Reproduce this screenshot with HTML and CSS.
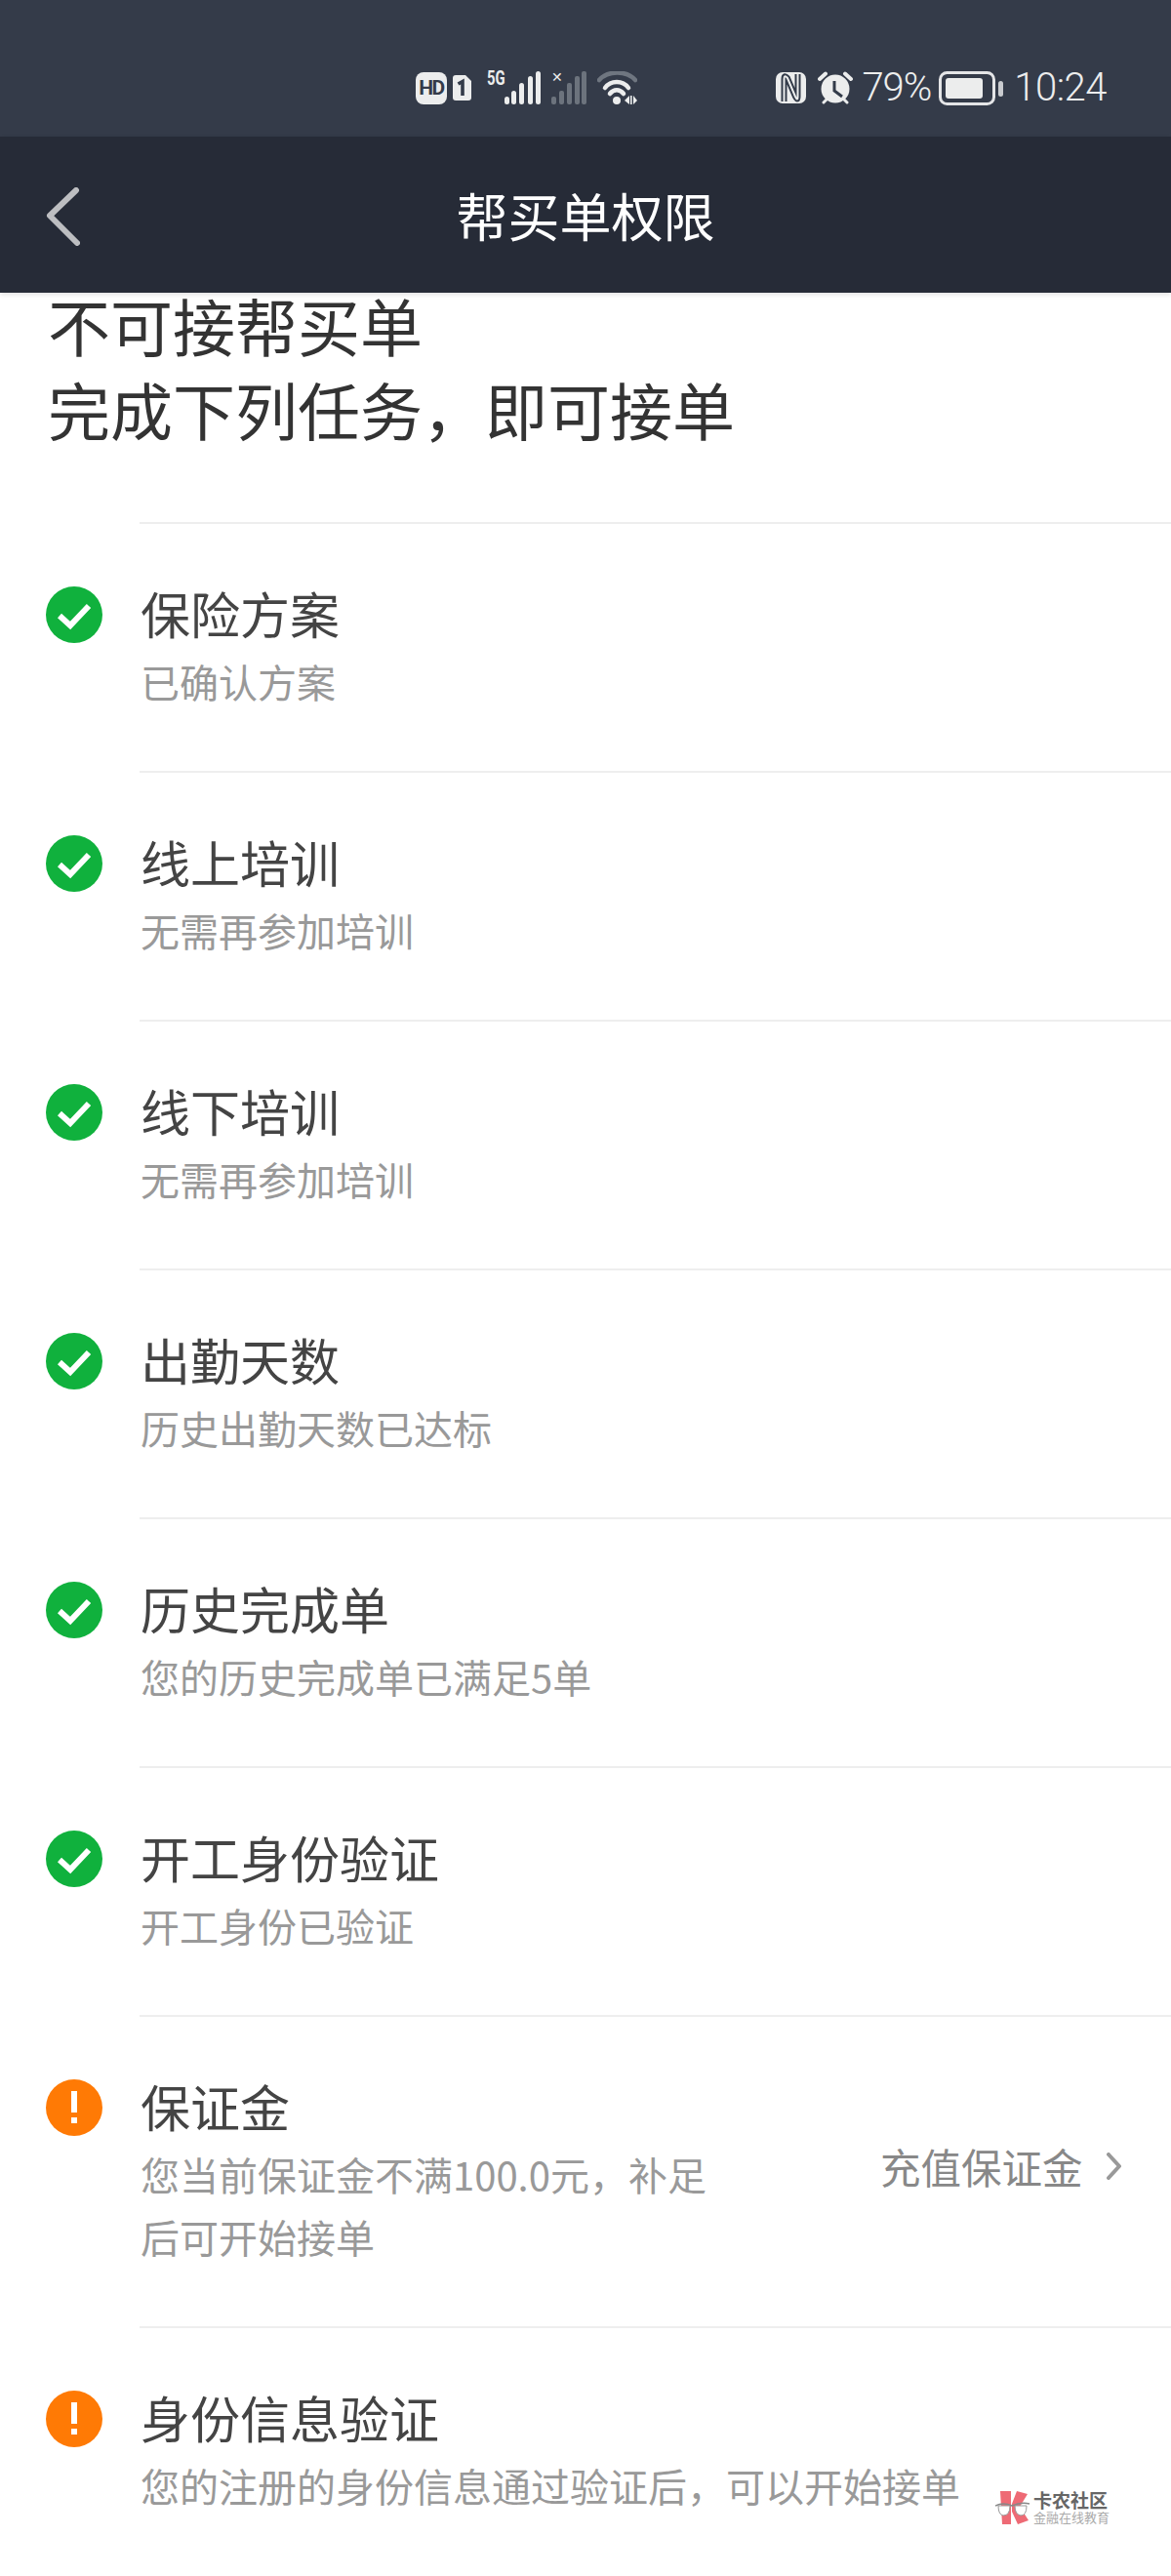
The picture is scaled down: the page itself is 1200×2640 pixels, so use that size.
FILE: index.html
```html
<!DOCTYPE html>
<html lang="zh-CN">
<head>
    <meta charset="UTF-8">
    <title>帮买单权限</title>
    <link rel="stylesheet" href="styles.css">
</head>
<body>
    <div class="page">
        <div class="status-bar">
            <div class="status-group status-left">
                <span class="hd-badge">HD</span>
                <svg class="sim" width="19" height="26" viewBox="0 0 19 26"><path d="M3 0H13L19 6V23a3 3 0 0 1-3 3H3a3 3 0 0 1-3-3V3a3 3 0 0 1 3-3Z" fill="#eceded"/><path d="M5.5 9L10 6.5V21" fill="none" stroke="#333b49" stroke-width="3.6"/></svg>
                <div class="signal">
                    <span class="signal-tag">5G</span>
                    <svg width="37" height="34" viewBox="0 0 37 34" fill="#eceded"><rect x="0" y="26" width="5" height="8" rx="2.5"/><rect x="7" y="20" width="5" height="14" rx="2.5"/><rect x="15" y="12" width="5" height="22" rx="2.5"/><rect x="24" y="5" width="5" height="29" rx="2.5"/><rect x="32" y="0" width="5" height="34" rx="2.5"/></svg>
                </div>
                <div class="signal">
                    <span class="signal-tag signal-x">✕</span>
                    <svg width="37" height="34" viewBox="0 0 37 34" fill="#6c737d"><rect x="0" y="26" width="5" height="8" rx="2"/><rect x="8" y="20" width="5" height="14" rx="2"/><rect x="16" y="12" width="5" height="22" rx="2"/><rect x="24" y="5" width="5" height="29" rx="2"/><rect x="31" y="0" width="5" height="34" rx="2"/></svg>
                </div>
                <svg width="41" height="35" viewBox="0 0 41 35" fill="none"><path d="M2 9C11 -1 30 -1 39 9" stroke="#6f7680" stroke-width="4.5" stroke-linecap="round"/><path d="M8 17C14 9 26 9 32 17" stroke="#eceded" stroke-width="4.5" stroke-linecap="round"/><path d="M13 23C17 18 23 18 27 23" stroke="#eceded" stroke-width="4.5" stroke-linecap="round"/><circle cx="20" cy="30" r="4" fill="#eceded"/><path d="M28 30L33 25V34Z" fill="#eceded"/><rect x="34" y="25" width="1.6" height="9" fill="#eceded"/><path d="M37 25L41 30 37 34Z" fill="#eceded"/></svg>
            </div>
            <div class="status-group status-right">
                <svg class="nfc" width="31" height="32" viewBox="0 0 31 32"><rect width="31" height="32" rx="7" fill="#eceded"/><path d="M8.5 30V7Q8.5 2 12 6L20 25Q22.5 30 22.5 25V2" fill="none" stroke="#333b49" stroke-width="6"/><path d="M8.5 30V7Q8.5 2 12 6L20 25Q22.5 30 22.5 25V2" fill="none" stroke="#eceded" stroke-width="2"/></svg>
                <svg class="alarm" width="36" height="34" viewBox="0 0 36 34"><circle cx="18" cy="18" r="14.5" fill="#eceded"/><path d="M2 8L8 2.5M34 8L28 2.5" stroke="#eceded" stroke-width="4" stroke-linecap="round"/><path d="M6 32l4-4M30 32l-4-4" stroke="#eceded" stroke-width="3" stroke-linecap="round"/><path d="M17 10V20L25 26" fill="none" stroke="#333b49" stroke-width="3"/></svg>
                <span class="status-text">79%</span>
                <svg class="battery" width="66" height="35" viewBox="0 0 66 35"><rect x="1.5" y="1.5" width="55" height="32" rx="7" fill="none" stroke="#e4e5e7" stroke-width="3"/><rect x="7" y="7" width="38" height="21" rx="3" fill="#eceded"/><rect x="61" y="10" width="5" height="16" rx="2.5" fill="#c9cbcf"/></svg>
                <span class="status-text status-time">10:24</span>
            </div>
        </div>

        <div class="nav-bar">
            <svg class="nav-back" width="36" height="60" viewBox="0 0 36 60"><path d="M32 3L5 29 33 57" fill="none" stroke="#bdbec1" stroke-width="6" stroke-linecap="round" stroke-linejoin="round"/></svg>
            <h1 class="nav-title">帮买单权限</h1>
        </div>

        <div class="heading">
            <div>不可接帮买单</div>
            <div>完成下列任务，即可接单</div>
        </div>

        <ul class="task-list">
            <li class="task">
                <div class="task-icon"><svg class="icon-ok" width="58" height="58" viewBox="0 0 58 58"><circle cx="29" cy="29" r="29" fill="#10b13d"/><path d="M14 30L25 40 44 20" fill="none" stroke="#fff" stroke-width="6"/></svg></div>
                <div class="task-body">
                    <div class="task-text">
                        <div class="task-title">保险方案</div>
                        <div class="task-sub">已确认方案</div>
                    </div>
                </div>
            </li>
            <li class="task">
                <div class="task-icon"><svg class="icon-ok" width="58" height="58" viewBox="0 0 58 58"><circle cx="29" cy="29" r="29" fill="#10b13d"/><path d="M14 30L25 40 44 20" fill="none" stroke="#fff" stroke-width="6"/></svg></div>
                <div class="task-body">
                    <div class="task-text">
                        <div class="task-title">线上培训</div>
                        <div class="task-sub">无需再参加培训</div>
                    </div>
                </div>
            </li>
            <li class="task">
                <div class="task-icon"><svg class="icon-ok" width="58" height="58" viewBox="0 0 58 58"><circle cx="29" cy="29" r="29" fill="#10b13d"/><path d="M14 30L25 40 44 20" fill="none" stroke="#fff" stroke-width="6"/></svg></div>
                <div class="task-body">
                    <div class="task-text">
                        <div class="task-title">线下培训</div>
                        <div class="task-sub">无需再参加培训</div>
                    </div>
                </div>
            </li>
            <li class="task">
                <div class="task-icon"><svg class="icon-ok" width="58" height="58" viewBox="0 0 58 58"><circle cx="29" cy="29" r="29" fill="#10b13d"/><path d="M14 30L25 40 44 20" fill="none" stroke="#fff" stroke-width="6"/></svg></div>
                <div class="task-body">
                    <div class="task-text">
                        <div class="task-title">出勤天数</div>
                        <div class="task-sub">历史出勤天数已达标</div>
                    </div>
                </div>
            </li>
            <li class="task">
                <div class="task-icon"><svg class="icon-ok" width="58" height="58" viewBox="0 0 58 58"><circle cx="29" cy="29" r="29" fill="#10b13d"/><path d="M14 30L25 40 44 20" fill="none" stroke="#fff" stroke-width="6"/></svg></div>
                <div class="task-body">
                    <div class="task-text">
                        <div class="task-title">历史完成单</div>
                        <div class="task-sub">您的历史完成单已满足5单</div>
                    </div>
                </div>
            </li>
            <li class="task">
                <div class="task-icon"><svg class="icon-ok" width="58" height="58" viewBox="0 0 58 58"><circle cx="29" cy="29" r="29" fill="#10b13d"/><path d="M14 30L25 40 44 20" fill="none" stroke="#fff" stroke-width="6"/></svg></div>
                <div class="task-body">
                    <div class="task-text">
                        <div class="task-title">开工身份验证</div>
                        <div class="task-sub">开工身份已验证</div>
                    </div>
                </div>
            </li>
            <li class="task">
                <div class="task-icon"><svg class="icon-warn" width="58" height="58" viewBox="0 0 58 58"><circle cx="29" cy="29" r="29" fill="#ff7a05"/><path d="M29 12V34" stroke="#fff" stroke-width="6"/><rect x="26" y="39" width="6" height="6" fill="#fff"/></svg></div>
                <div class="task-body">
                    <div class="task-text task-text-narrow">
                        <div class="task-title">保证金</div>
                        <div class="task-sub">您当前保证金不满100.0元，补足后可开始接单</div>
                    </div>
                    <div class="task-action">
                        <span>充值保证金</span>
                        <svg width="16" height="28" viewBox="0 0 16 28"><path d="M3 2L14 14 3 26" fill="none" stroke="#999" stroke-width="4" stroke-linecap="round" stroke-linejoin="round"/></svg>
                    </div>
                </div>
            </li>
            <li class="task">
                <div class="task-icon"><svg class="icon-warn" width="58" height="58" viewBox="0 0 58 58"><circle cx="29" cy="29" r="29" fill="#ff7a05"/><path d="M29 12V34" stroke="#fff" stroke-width="6"/><rect x="26" y="39" width="6" height="6" fill="#fff"/></svg></div>
                <div class="task-body">
                    <div class="task-text">
                        <div class="task-title">身份信息验证</div>
                        <div class="task-sub">您的注册的身份信息通过验证后，可以开始接单</div>
                    </div>
                </div>
            </li>
        </ul>

        <!-- watermark over the page -->
        <div class="watermark">
            <svg width="36" height="36" viewBox="0 0 36 36"><path d="M5 1H16V35H7ZM17 14L22 1 33 4 25 17 34 31 23 35 17 22Z" fill="#ee6a75"/><path d="M0 16Q8 12 17 16 26 12 35 14" fill="none" stroke="#888" stroke-width="1.5"/><path d="M3 16H15Q15 26 8 26 3 25 3 16ZM20 16H32Q32 26 26 26 20 25 20 16Z" fill="#fff" stroke="#999" stroke-width="1"/></svg>
            <div class="watermark-text">
                <div class="watermark-name">卡农社区</div>
                <div class="watermark-sub">金融在线教育</div>
            </div>
        </div>
    </div>
</body>
</html>
```

FILE: styles.css
```css
*{
    box-sizing: border-box;
}
body{
    margin: 0;
    background-color: #ffffff;
    font-family: "Noto Sans CJK SC", "Noto Sans", sans-serif;
}
.page{
    position: relative;
    width: 1200px;
    height: 2640px;
    overflow: hidden;
}

/* status bar */
.status-bar{
    height: 140px;
    padding: 40px 66px 0 426px;
    background-color: #343b49;
    display: flex;
    justify-content: space-between;
    align-items: center;
    color: #eceded;
}
.status-group{
    display: flex;
    align-items: center;
}
.status-left{
    width: 227px;
}
.hd-badge{
    width: 32px;
    height: 33px;
    border-radius: 8px;
    background-color: #eceded;
    color: #343b49;
    font-family: "Roboto", sans-serif;
    font-size: 21px;
    font-weight: 700;
    letter-spacing: -1.5px;
    line-height: 33px;
    text-align: center;
}
.sim{
    margin-left: 6px;
}
.signal{
    position: relative;
    width: 37px;
    height: 34px;
    margin-left: 34px;
}
.signal + .signal{
    margin-left: 11px;
}
.signal svg{
    display: block;
}
.signal-tag{
    position: absolute;
    top: -2px;
    left: -18px;
    font-family: "Roboto", sans-serif;
    font-size: 20px;
    font-weight: 700;
    line-height: 18px;
    transform: scaleX(.74);
    transform-origin: left center;
}
.signal-x{
    left: 0;
    top: -1px;
    font-family: "DejaVu Sans", sans-serif;
    font-size: 14px;
    line-height: 14px;
    transform: none;
}
.signal + svg{
    margin-left: 10px;
}
.alarm{
    margin-left: 12px;
}
.status-text{
    margin-left: 9px;
    font-family: "Roboto", sans-serif;
    font-size: 40px;
    font-weight: 300;
    line-height: 44px;
    letter-spacing: -1px;
}
.battery{
    margin-left: 8px;
}
.status-time{
    margin-left: 11px;
    letter-spacing: -0.5px;
}

/* nav */
.nav-bar{
    position: relative;
    z-index: 1;
    height: 160px;
    background-color: #262b37;
    display: flex;
    align-items: center;
    justify-content: center;
    box-shadow: 0 2px 5px rgba(0,0,0,.12);
}
.nav-back{
    position: absolute;
    left: 46px;
    top: 52px;
}
.nav-title{
    margin: 0;
    color: #ffffff;
    font-size: 53px;
    font-weight: 400;
    line-height: 70px;
}

/* heading */
.heading{
    height: 235px;
    padding-left: 49px;
    color: #333333;
    font-size: 64px;
    line-height: 86px;
    margin-top: -11px;
    margin-bottom: 11px;
}

/* tasks */
.task-list{
    list-style: none;
    margin: 0;
    padding: 0;
}
.task{
    display: flex;
}
.task-icon{
    width: 143px;
    padding: 66px 0 0 47px;
}
.task-icon svg{
    display: block;
}
.task-body{
    flex: 1;
    display: flex;
    min-height: 255px;
    padding-top: 56px;
    border-top: 2px solid #eeeeee;
}
.task-text{
    padding-left: 1px;
}
.task-text-narrow{
    width: 600px;
    padding-bottom: 60px;
}
.task-title{
    color: #444444;
    font-size: 51px;
    line-height: 70px;
}
.task-sub{
    color: #999999;
    font-size: 40px;
    line-height: 64px;
    margin-top: 3px;
}
.task-action{
    margin-left: 159px;
    margin-top: 67px;
    height: 60px;
    display: flex;
    align-items: center;
    gap: 23px;
    color: #888888;
    font-size: 41.5px;
    line-height: 60px;
}

/* watermark */
.watermark{
    position: absolute;
    left: 1020px;
    top: 2552px;
    display: flex;
    gap: 3px;
}
.watermark-name{
    color: #666666;
    font-size: 19px;
    font-weight: 700;
    line-height: 20px;
}
.watermark-sub{
    color: #aaaaaa;
    font-size: 13px;
    line-height: 14px;
    margin-top: 1px;
}
```
